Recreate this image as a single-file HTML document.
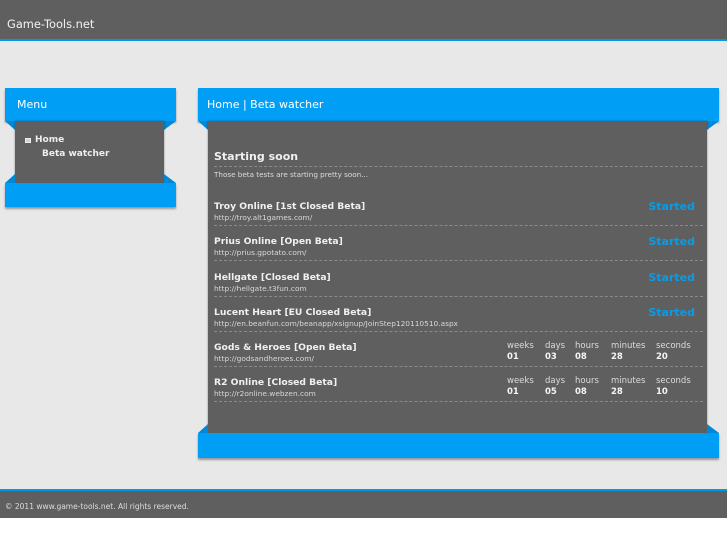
<!DOCTYPE html>
<html><head><style>
*{margin:0;padding:0;box-sizing:border-box}
body{width:727px;height:545px;background:#fff;font-family:"DejaVu Sans","Liberation Sans",sans-serif;position:relative;overflow:hidden}
.a{position:absolute}
.bg{left:0;top:0;width:727px;height:518px;background:#e8e8e8}
.hdr{left:0;top:0;width:727px;height:41px;background:#5f5f5f;border-bottom:2px solid #0099e6}
.blue{background:#009ff5;box-shadow:0 2px 2px rgba(0,0,0,.35)}
.dark{background:#5f5f5f}
.row{left:214px;width:489px;height:25px;border-bottom:1px dashed #8a8a8a}
.t{position:absolute;left:0;top:0;font-size:9.2px;font-weight:bold;color:#f0f0f0;white-space:nowrap}
.u{position:absolute;left:0;top:12px;font-size:7.4px;color:#d8d8d8;white-space:nowrap}
.s{position:absolute;right:8px;top:-1px;font-size:11px;font-weight:bold;color:#0a9be6}
.cd{position:absolute;top:-1px;font-size:8.5px;color:#dcdcdc;line-height:11px}
.cd b{display:block;color:#f5f5f5;font-size:8.5px}
</style></head><body>
<div class="a bg"></div>
<div class="a hdr"><div class="a" style="left:7px;top:17px;color:#f2f2f2;font-size:11.4px">Game-Tools.net</div></div>

<!-- menu -->
<div class="a blue" style="left:5px;top:88px;width:171px;height:33px"><div class="a" style="left:12px;top:10px;color:#fff;font-size:11px">Menu</div></div>
<div class="a" style="left:5px;top:121px;width:0;height:0;border-top:9px solid #0088d8;border-left:10px solid transparent"></div>
<div class="a" style="left:164px;top:121px;width:0;height:0;border-top:9px solid #0088d8;border-right:12px solid transparent"></div>
<div class="a dark" style="left:15px;top:121px;width:149px;height:62px;box-shadow:0 0 2px rgba(0,0,0,.4)"></div>
<div class="a" style="left:25px;top:138px;width:6px;height:5px;background:#c0d8ee;border:1px solid #eee"></div>
<div class="a" style="left:35px;top:135px;color:#eee;font-size:9px;font-weight:bold">Home</div>
<div class="a" style="left:42px;top:149px;color:#eee;font-size:9px;font-weight:bold">Beta watcher</div>
<div class="a blue" style="left:5px;top:183px;width:171px;height:24px"></div>
<div class="a" style="left:5px;top:174px;width:0;height:0;border-bottom:9px solid #0088d8;border-left:10px solid transparent"></div>
<div class="a" style="left:164px;top:174px;width:0;height:0;border-bottom:9px solid #0088d8;border-right:12px solid transparent"></div>

<!-- main -->
<div class="a blue" style="left:198px;top:88px;width:521px;height:33px"><div class="a" style="left:9px;top:10px;color:#fff;font-size:11px">Home | Beta watcher</div></div>
<div class="a" style="left:198px;top:121px;width:0;height:0;border-top:9px solid #0088d8;border-left:10px solid transparent"></div>
<div class="a" style="left:707px;top:121px;width:0;height:0;border-top:9px solid #0088d8;border-right:12px solid transparent"></div>
<div class="a dark" style="left:208px;top:121px;width:499px;height:312px;box-shadow:0 0 2px rgba(0,0,0,.4)"></div>
<div class="a blue" style="left:198px;top:433px;width:521px;height:25px"></div>
<div class="a" style="left:198px;top:424px;width:0;height:0;border-bottom:9px solid #0088d8;border-left:10px solid transparent"></div>
<div class="a" style="left:707px;top:424px;width:0;height:0;border-bottom:9px solid #0088d8;border-right:12px solid transparent"></div>

<div class="a" style="left:214px;top:150px;width:489px;height:17px;border-bottom:1px dashed #8a8a8a;color:#f0f0f0;font-size:11px;font-weight:bold">Starting soon</div>
<div class="a" style="left:214px;top:170px;color:#ddd;font-size:7.2px">Those beta tests are starting pretty soon...</div>

<div class="a row" style="top:201px"><div class="t">Troy Online [1st Closed Beta]</div><div class="u">http://troy.alt1games.com/</div><div class="s">Started</div></div>
<div class="a row" style="top:236px"><div class="t">Prius Online [Open Beta]</div><div class="u">http://prius.gpotato.com/</div><div class="s">Started</div></div>
<div class="a row" style="top:272px"><div class="t">Hellgate [Closed Beta]</div><div class="u">http://hellgate.t3fun.com</div><div class="s">Started</div></div>
<div class="a row" style="top:307px"><div class="t">Lucent Heart [EU Closed Beta]</div><div class="u">http://en.beanfun.com/beanapp/xsignup/JoinStep120110510.aspx</div><div class="s">Started</div></div>
<div class="a row" style="top:342px"><div class="t">Gods &amp; Heroes [Open Beta]</div><div class="u">http://godsandheroes.com/</div>
<div class="cd" style="left:293px">weeks<b>01</b></div><div class="cd" style="left:331px">days<b>03</b></div><div class="cd" style="left:361px">hours<b>08</b></div><div class="cd" style="left:397px">minutes<b>28</b></div><div class="cd" style="left:442px">seconds<b>20</b></div></div>
<div class="a row" style="top:377px"><div class="t">R2 Online [Closed Beta]</div><div class="u">http://r2online.webzen.com</div>
<div class="cd" style="left:293px">weeks<b>01</b></div><div class="cd" style="left:331px">days<b>05</b></div><div class="cd" style="left:361px">hours<b>08</b></div><div class="cd" style="left:397px">minutes<b>28</b></div><div class="cd" style="left:442px">seconds<b>10</b></div></div>

<!-- footer -->
<div class="a" style="left:0;top:489px;width:727px;height:29px;background:#5f5f5f;border-top:2px solid #0099e6"><div class="a" style="left:5px;top:11px;color:#ddd;font-size:7.5px">© 2011 www.game-tools.net. All rights reserved.</div></div>
</body></html>
